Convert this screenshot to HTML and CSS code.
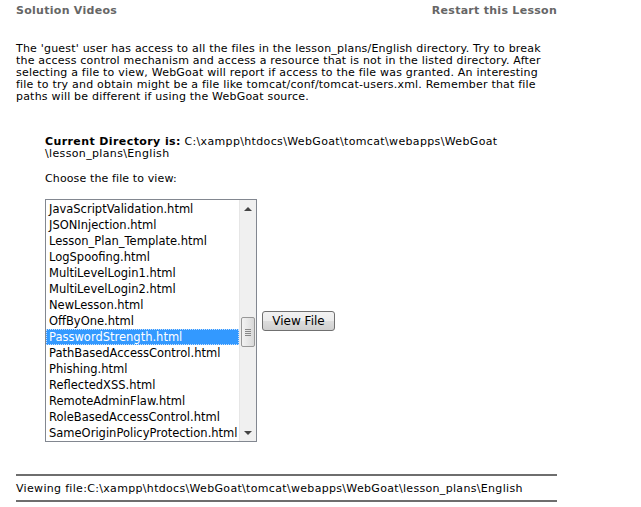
FILE: index.html
```html
<!DOCTYPE html>
<html lang="en">
<head>
  <meta charset="UTF-8" />
  <title>Access Control Flaws</title>
  <link rel="stylesheet" href="styles.css">
</head>
<body>

  <div class="page">
    <div class="topbar">
      <a href="#">Solution Videos</a>
      <a href="#">Restart this Lesson</a>
    </div>

    <p class="intro">The 'guest' user has access to all the files in the lesson_plans/English directory. Try to break<br>
      the access control mechanism and access a resource that is not in the listed directory. After<br>
      selecting a file to view, WebGoat will report if access to the file was granted. An interesting<br>
      file to try and obtain might be a file like tomcat/conf/tomcat-users.xml. Remember that file<br>
      paths will be different if using the WebGoat source.</p>

    <div class="lesson">
      <p class="curdir"><b>Current Directory is:</b> <span class="path">C:\xampp\htdocs\WebGoat\tomcat\webapps\WebGoat<br>\lesson_plans\English</span></p>
      <p class="choose">Choose the file to view:</p>

      <div class="picker">
        <div class="listbox">
          <ul class="items">
            <li>JavaScriptValidation.html</li>
            <li>JSONInjection.html</li>
            <li>Lesson_Plan_Template.html</li>
            <li>LogSpoofing.html</li>
            <li>MultiLevelLogin1.html</li>
            <li>MultiLevelLogin2.html</li>
            <li>NewLesson.html</li>
            <li>OffByOne.html</li>
            <li class="selected">PasswordStrength.html</li>
            <li>PathBasedAccessControl.html</li>
            <li>Phishing.html</li>
            <li>ReflectedXSS.html</li>
            <li>RemoteAdminFlaw.html</li>
            <li>RoleBasedAccessControl.html</li>
            <li>SameOriginPolicyProtection.html</li>
          </ul>
          <div class="scrollbar">
            <div class="arrow up"></div>
            <div class="track">
              <div class="thumb"><span></span><span></span><span></span><span></span></div>
            </div>
            <div class="arrow down"></div>
          </div>
        </div>
        <button class="view-btn">View File</button>
      </div>
    </div>

    <hr>
    <div class="viewing">Viewing file:C:\xampp\htdocs\WebGoat\tomcat\webapps\WebGoat\lesson_plans\English</div>
    <hr>
  </div>

</body>
</html>
```

FILE: styles.css
```css
* {
  box-sizing: border-box;
}

body {
  margin: 0;
  background: #fff;
  color: #000;
  font-family: 'DejaVu Sans', Verdana, sans-serif;
  font-size: 11px;
  letter-spacing: 0.12px;
}

.page {
  width: 541px;
  margin-left: 16px;
  padding-top: 4px;
}

.topbar {
  display: flex;
  justify-content: space-between;
  line-height: 14px;
}

.topbar a {
  color: #666;
  font-weight: bold;
  text-decoration: none;
  letter-spacing: 0.28px;
}

.intro {
  margin: 25px -30px 0 0;
  line-height: 12px;
  white-space: nowrap;
  letter-spacing: 0.2px;
}

.lesson {
  padding-left: 29px;
  margin-top: 33px;
}

.curdir {
  margin: 0;
  line-height: 12px;
}

.curdir b {
  letter-spacing: 0.4px;
}

.path {
  letter-spacing: 0.35px;
}

.choose {
  margin: 13px 0 0;
  line-height: 12px;
}

.picker {
  display: flex;
  align-items: center;
  gap: 5px;
  margin-top: 14px;
}

.listbox {
  display: flex;
  width: 212px;
  height: 243px;
  border: 1px solid #828790;
  background: #fff;
}

.items {
  flex: 1;
  list-style: none;
  margin: 0;
  padding: 1px 0 0;
  font-family: 'DejaVu Sans', Tahoma, sans-serif;
  font-size: 11.5px;
  letter-spacing: 0;
  overflow: hidden;
}

.items li {
  height: 16px;
  line-height: 16px;
  padding-left: 3px;
  white-space: nowrap;
  color: #000;
}

.items li.selected {
  background: #3399ff;
  color: #fff;
  outline: 1px dotted #c7e0ff;
  outline-offset: -1px;
}

.scrollbar {
  width: 17px;
  display: flex;
  flex-direction: column;
  background: #f0f0f0;
  border-left: 1px solid #e6e6e6;
}

.arrow {
  height: 17px;
  display: flex;
  align-items: center;
  justify-content: center;
}

.arrow::before {
  content: "";
  border-left: 4px solid transparent;
  border-right: 4px solid transparent;
}

.arrow.up::before {
  border-bottom: 4px solid #444;
}

.arrow.down::before {
  border-top: 4px solid #444;
}

.track {
  flex: 1;
  padding: 0 1px;
}

.thumb {
  margin-top: 100px;
  height: 30px;
  border: 1px solid #989898;
  border-radius: 2px;
  background: linear-gradient(to right, #f3f3f3, #e4e4e4 60%, #d8d8d8);
  display: flex;
  flex-direction: column;
  align-items: center;
  justify-content: center;
  gap: 1px;
}

.thumb span {
  width: 6px;
  height: 1px;
  background: #888;
}

.view-btn {
  width: 73px;
  height: 20px;
  padding: 0;
  font-family: 'DejaVu Sans', Tahoma, sans-serif;
  font-size: 12px;
  color: #000;
  border: 1px solid #707070;
  border-radius: 3px;
  background: linear-gradient(#f2f2f2, #ebebeb 50%, #dddddd 50%, #cfcfcf);
}

hr {
  margin: 0;
  border: 0;
  border-top: 2px solid #6e6e6e;
}

hr:first-of-type {
  margin-top: 32px;
}

.viewing {
  line-height: 13px;
  padding: 6px 0 5px;
  letter-spacing: 0.32px;
}
```
